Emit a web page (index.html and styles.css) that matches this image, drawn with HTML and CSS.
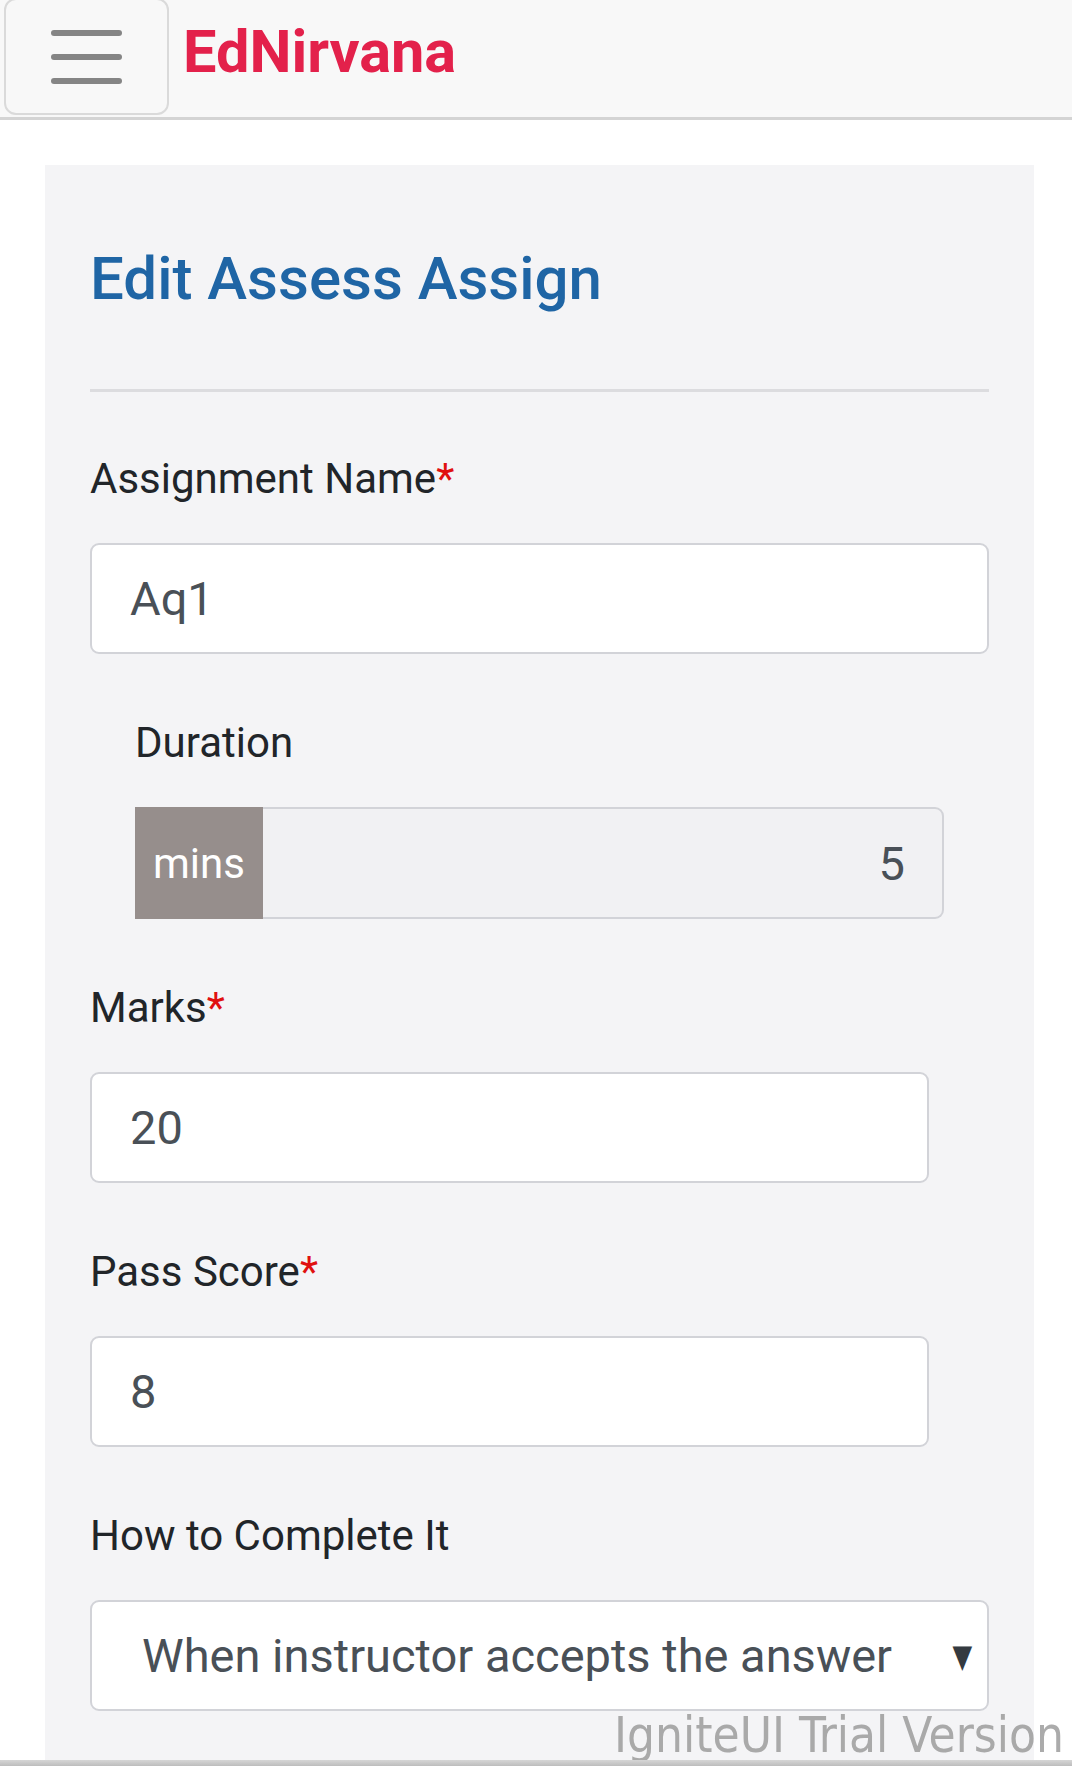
FILE: index.html
```html
<!DOCTYPE html>
<html lang="en">
<head>
<meta charset="utf-8">
<title>EdNirvana - Edit Assess Assign</title>
<link rel="stylesheet" href="styles.css">
</head>
<body>
<header class="topbar">
  <button class="menu-btn" type="button" aria-label="Menu">
    <span class="bar"></span>
    <span class="bar"></span>
    <span class="bar"></span>
  </button>
  <span class="brand">EdNirvana</span>
</header>

<main class="card">
  <h1 class="title">Edit Assess Assign</h1>
  <hr class="divider">

  <div class="field">
    <label class="label">Assignment Name<span class="req">*</span></label>
    <div class="input">Aq1</div>
  </div>

  <div class="field field-indent">
    <label class="label">Duration</label>
    <div class="group">
      <span class="addon">mins</span>
      <div class="input input-disabled">5</div>
    </div>
  </div>

  <div class="field field-narrow">
    <label class="label">Marks<span class="req">*</span></label>
    <div class="input">20</div>
  </div>

  <div class="field field-narrow">
    <label class="label">Pass Score<span class="req">*</span></label>
    <div class="input">8</div>
  </div>

  <div class="field">
    <label class="label">How to Complete It</label>
    <div class="input select">
      <span class="select-text">When instructor accepts the answer</span>
      <span class="caret">&#9660;</span>
    </div>
  </div>
</main>

<div class="watermark">IgniteUI Trial Version</div>
<div class="bottom-edge"></div>
</body>
</html>
```

FILE: styles.css
```css
html, body {
  margin: 0;
  padding: 0;
  background: #ffffff;
}

body {
  font-family: Roboto, "Liberation Sans", Arial, sans-serif;
  color: #212529;
  width: 1072px;
  overflow: hidden;
}

.topbar {
  display: flex;
  align-items: center;
  height: 117px;
  background: #f8f8f8;
  border-bottom: 3px solid #d4d4d4;
  box-sizing: content-box;
}

.menu-btn {
  margin-left: 4px;
  align-self: flex-start;
  width: 165px;
  height: 117px;
  margin-top: -2px;
  background: #f8f8f8;
  border: 2px solid #dadada;
  border-radius: 12px;
  display: flex;
  flex-direction: column;
  align-items: center;
  justify-content: center;
  gap: 18px;
  padding: 0;
  box-sizing: border-box;
}

.bar {
  display: block;
  width: 71px;
  height: 6px;
  border-radius: 3px;
  background: #858585;
}

.brand {
  margin-left: 14px;
  margin-top: -14px;
  font-weight: 700;
  font-size: 59.5px;
  color: #e3214b;
  letter-spacing: 0;
}

.card {
  display: block;
  margin: 45px 0 0 45px;
  width: 989px;
  box-sizing: border-box;
  background: #f4f4f6;
  padding: 78px 45px 120px 45px;
}

.title {
  margin: 0;
  font-size: 60px;
  line-height: 72px;
  font-weight: 500;
  color: #1f65a5;
}

.divider {
  margin: 74px 0 55px 0;
  border: 0;
  border-top: 3px solid #dcdcdf;
  height: 0;
}

.field {
  margin-bottom: 57px;
}

.field:last-child {
  margin-bottom: 0;
}

.field-indent {
  padding-left: 45px;
  padding-right: 45px;
}

.field-narrow {
  padding-right: 60px;
}

.label {
  display: block;
  font-size: 42px;
  line-height: 63px;
  margin-bottom: 33px;
  color: #212529;
}

.req {
  color: #e01010;
}

.input {
  display: flex;
  align-items: center;
  height: 111px;
  box-sizing: border-box;
  background: #ffffff;
  border: 2px solid #d2d3d8;
  border-radius: 9px;
  padding: 0 38px;
  font-size: 47px;
  color: #495057;
}

.group {
  display: flex;
  height: 112px;
}

.addon {
  display: flex;
  align-items: center;
  justify-content: center;
  width: 128px;
  background: #968e8c;
  color: #ffffff;
  font-size: 42px;
  flex: none;
}

.input-disabled {
  flex: 1;
  height: 112px;
  justify-content: flex-end;
  background: #f1f1f3;
  border-left: 0;
  border-radius: 0 9px 9px 0;
  padding-right: 37px;
}

.select {
  padding: 0 12px 0 50px;
}

.select-text {
  white-space: nowrap;
}

.caret {
  margin-left: auto;
  font-size: 32px;
  color: #343a40;
  font-family: "DejaVu Sans", sans-serif;
  transform: scaleX(0.8);
}

.watermark {
  position: absolute;
  right: 8px;
  top: 1706px;
  font-family: "DejaVu Sans Condensed", "DejaVu Sans", sans-serif;
  font-size: 49px;
  line-height: 60px;
  color: rgba(150, 150, 150, 0.8);
  white-space: nowrap;
}

.bottom-edge {
  position: fixed;
  left: 0;
  right: 0;
  bottom: 0;
  height: 6px;
  background: linear-gradient(#d6d6d6, #bdbdbd);
}
```
